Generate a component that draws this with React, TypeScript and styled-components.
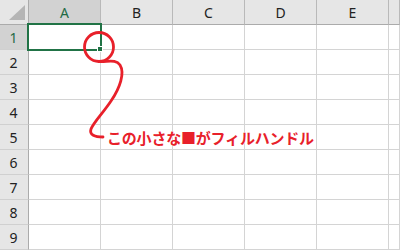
import { Fragment } from 'react';
import styled, { createGlobalStyle } from 'styled-components';

const GlobalStyle = createGlobalStyle`
    html, body {
        margin: 0;
        padding: 0;
        background: #ffffff;
        font-family: "Noto Sans", "Liberation Sans", sans-serif;
    }
`;

const Sheet = styled.div`
    position: relative;
    width: 400px;
    height: 250px;
    overflow: hidden;
    background: #ffffff;
`;

const Grid = styled.div`
    display: grid;
    grid-template-columns: 29px repeat(5, 72px) 1fr;
    grid-auto-rows: 25px;
`;

const Corner = styled.div`
    position: relative;
    box-sizing: border-box;
    background: #e6e6e6;
    border-right: 1px solid #ababab;
    border-bottom: 1px solid #ababab;

    &::after {
        content: '';
        position: absolute;
        right: 3px;
        bottom: 4px;
        width: 0;
        height: 0;
        border-left: 16px solid transparent;
        border-bottom: 15px solid #b5b5b5;
    }
`;

const ColHeader = styled.div<{ $selected?: boolean }>`
    box-sizing: border-box;
    display: flex;
    align-items: center;
    justify-content: center;
    background: ${p => (p.$selected ? '#d2d2d2' : '#e6e6e6')};
    color: ${p => (p.$selected ? '#1f6b45' : '#222222')};
    border-right: 1px solid #b9b9b9;
    border-bottom: 1px solid #ababab;
    font-size: 14px;
    padding-top: 1px;
`;

const RowHeader = styled.div<{ $selected?: boolean }>`
    box-sizing: border-box;
    display: flex;
    align-items: center;
    justify-content: center;
    background: ${p => (p.$selected ? '#d2d2d2' : '#e6e6e6')};
    color: ${p => (p.$selected ? '#1f6b45' : '#222222')};
    border-right: 1px solid #ababab;
    border-bottom: 1px solid #d0d0d0;
    font-size: 14px;
    padding-right: 1px;
`;

const Cell = styled.div`
    box-sizing: border-box;
    background: #ffffff;
    border-right: 1px solid #d4d4d4;
    border-bottom: 1px solid #d4d4d4;
`;

const Selection = styled.div`
    position: absolute;
    left: 27px;
    top: 23px;
    width: 75px;
    height: 28px;
    box-sizing: border-box;
    border: 2px solid #217346;
`;

const FillHandle = styled.div`
    position: absolute;
    left: 97px;
    top: 46px;
    width: 6px;
    height: 6px;
    box-sizing: border-box;
    background: #217346;
    border: 1px solid #ffffff;
`;

const Callout = styled.svg`
    position: absolute;
    left: 0;
    top: 0;
    pointer-events: none;
`;

const Label = styled.div`
    position: absolute;
    left: 107px;
    top: 128px;
    font-family: "Noto Sans CJK JP", "Noto Sans", sans-serif;
    font-weight: 700;
    font-size: 15px;
    line-height: 20px;
    letter-spacing: -0.2px;
    color: #e8202a;
    white-space: nowrap;
    text-shadow: 0 0 2px #ffffff, 0 0 1px #ffffff;
`;

const columns = ['A', 'B', 'C', 'D', 'E', ''];
const rows = [1, 2, 3, 4, 5, 6, 7, 8, 9];

const App = () => {
    return (
        <Sheet>
            <GlobalStyle />
            <Grid>
                <Corner />
                {columns.map((col, i) => (
                    <ColHeader key={i} $selected={col === 'A'}>{col}</ColHeader>
                ))}
                {rows.map(row => (
                    <Fragment key={row}>
                        <RowHeader $selected={row === 1}>{row}</RowHeader>
                        {columns.map((_, i) => (
                            <Cell key={i} />
                        ))}
                    </Fragment>
                ))}
            </Grid>
            <Selection />
            <FillHandle />
            <Callout width="400" height="250" viewBox="0 0 400 250">
                <g fill="none" stroke="#e8202a" strokeWidth="2.8" strokeLinecap="round">
                    <circle cx="99" cy="47" r="14.5" />
                    <path d="M 99 61.5 C 108 62, 116 59, 120 65 C 125 73, 120 88, 111 101 C 103 113, 94 122, 91 129 C 89 135, 95 137, 103 137" />
                </g>
            </Callout>
            <Label>この小さな■がフィルハンドル</Label>
        </Sheet>
    );
};

export default App;
